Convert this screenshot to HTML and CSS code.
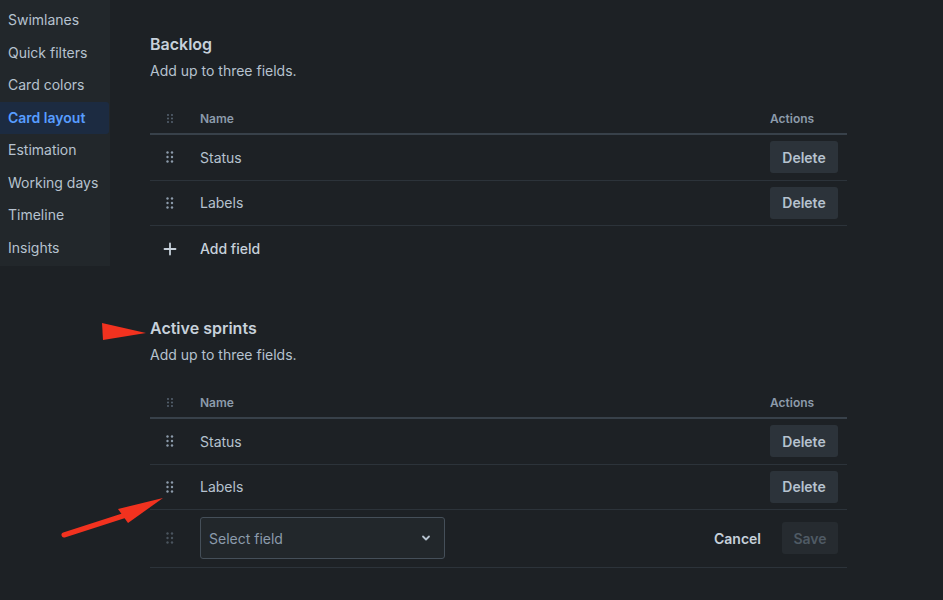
FILE: index.html
```html
<!DOCTYPE html>
<html>
<head>
<meta charset="utf-8">
<link rel="stylesheet" href="styles.css">
</head>
<body>
<div class="page">
  <nav class="sidebar">
    <div class="nav-item">Swimlanes</div>
    <div class="nav-item">Quick filters</div>
    <div class="nav-item">Card colors</div>
    <div class="nav-item active">Card layout</div>
    <div class="nav-item">Estimation</div>
    <div class="nav-item">Working days</div>
    <div class="nav-item">Timeline</div>
    <div class="nav-item">Insights</div>
  </nav>
  <main class="main">
    <section class="section">
      <h2 class="title">Backlog</h2>
      <p class="desc">Add up to three fields.</p>
      <div class="table">
        <div class="row head">
          <div class="c-drag"><svg class="drag dim" width="6" height="9" viewBox="0 0 6 9"><circle cx="1" cy="1" r="0.9"/><circle cx="5" cy="1" r="0.9"/><circle cx="1" cy="4.5" r="0.9"/><circle cx="5" cy="4.5" r="0.9"/><circle cx="1" cy="8" r="0.9"/><circle cx="5" cy="8" r="0.9"/></svg></div>
          <div class="c-name">Name</div>
          <div class="c-act">Actions</div>
        </div>
        <div class="row">
          <div class="c-drag"><svg class="drag" width="8" height="12" viewBox="0 0 8 12"><circle cx="1.5" cy="1.5" r="1.2"/><circle cx="6" cy="1.5" r="1.2"/><circle cx="1.5" cy="6" r="1.2"/><circle cx="6" cy="6" r="1.2"/><circle cx="1.5" cy="10.5" r="1.2"/><circle cx="6" cy="10.5" r="1.2"/></svg></div>
          <div class="c-name">Status</div>
          <div class="c-act"><button class="btn">Delete</button></div>
        </div>
        <div class="row">
          <div class="c-drag"><svg class="drag" width="8" height="12" viewBox="0 0 8 12"><circle cx="1.5" cy="1.5" r="1.2"/><circle cx="6" cy="1.5" r="1.2"/><circle cx="1.5" cy="6" r="1.2"/><circle cx="6" cy="6" r="1.2"/><circle cx="1.5" cy="10.5" r="1.2"/><circle cx="6" cy="10.5" r="1.2"/></svg></div>
          <div class="c-name">Labels</div>
          <div class="c-act"><button class="btn">Delete</button></div>
        </div>
        <div class="row add">
          <div class="c-drag"><svg class="plus" width="14" height="14" viewBox="0 0 14 14"><path d="M7 1.5v11M1.5 7h11" stroke-width="1.8" stroke-linecap="round"/></svg></div>
          <div class="c-name strong">Add field</div>
        </div>
      </div>
    </section>

    <section class="section second">
      <h2 class="title">Active sprints</h2>
      <p class="desc">Add up to three fields.</p>
      <div class="table">
        <div class="row head">
          <div class="c-drag"><svg class="drag dim" width="6" height="9" viewBox="0 0 6 9"><circle cx="1" cy="1" r="0.9"/><circle cx="5" cy="1" r="0.9"/><circle cx="1" cy="4.5" r="0.9"/><circle cx="5" cy="4.5" r="0.9"/><circle cx="1" cy="8" r="0.9"/><circle cx="5" cy="8" r="0.9"/></svg></div>
          <div class="c-name">Name</div>
          <div class="c-act">Actions</div>
        </div>
        <div class="row">
          <div class="c-drag"><svg class="drag" width="8" height="12" viewBox="0 0 8 12"><circle cx="1.5" cy="1.5" r="1.2"/><circle cx="6" cy="1.5" r="1.2"/><circle cx="1.5" cy="6" r="1.2"/><circle cx="6" cy="6" r="1.2"/><circle cx="1.5" cy="10.5" r="1.2"/><circle cx="6" cy="10.5" r="1.2"/></svg></div>
          <div class="c-name">Status</div>
          <div class="c-act"><button class="btn">Delete</button></div>
        </div>
        <div class="row">
          <div class="c-drag"><svg class="drag" width="8" height="12" viewBox="0 0 8 12"><circle cx="1.5" cy="1.5" r="1.2"/><circle cx="6" cy="1.5" r="1.2"/><circle cx="1.5" cy="6" r="1.2"/><circle cx="6" cy="6" r="1.2"/><circle cx="1.5" cy="10.5" r="1.2"/><circle cx="6" cy="10.5" r="1.2"/></svg></div>
          <div class="c-name">Labels</div>
          <div class="c-act"><button class="btn">Delete</button></div>
        </div>
        <div class="row edit">
          <div class="c-drag"><svg class="drag faint" width="8" height="12" viewBox="0 0 8 12"><circle cx="1.5" cy="1.5" r="1.2"/><circle cx="6" cy="1.5" r="1.2"/><circle cx="1.5" cy="6" r="1.2"/><circle cx="6" cy="6" r="1.2"/><circle cx="1.5" cy="10.5" r="1.2"/><circle cx="6" cy="10.5" r="1.2"/></svg></div>
          <div class="c-name">
            <div class="select">
              <span class="placeholder">Select field</span>
              <svg class="chev" width="12" height="12" viewBox="0 0 12 12"><path d="M3 4.5l3 3 3-3" fill="none" stroke-width="1.8" stroke-linecap="round" stroke-linejoin="round"/></svg>
            </div>
          </div>
          <div class="c-edit">
            <button class="link">Cancel</button>
            <button class="btn disabled">Save</button>
          </div>
        </div>
      </div>
    </section>
  </main>
</div>
<svg class="annot" width="943" height="600" viewBox="0 0 943 600">
  <polygon points="102,323 146,333 103,340" fill="#f2321f"/>
  <path d="M64 535 L126 515" stroke="#f2321f" stroke-width="5" stroke-linecap="round"/>
  <polygon points="163,498 118,509 128,523" fill="#f2321f"/>
</svg>
</body>
</html>
```
FILE: styles.css
```css
* { box-sizing: border-box; }
html, body {
  margin: 0;
  padding: 0;
  background: #1d2125;
  color: #b6c2cf;
  font-family: Inter, "Noto Sans", "Liberation Sans", sans-serif;
  font-size: 14px;
}
.page {
  display: flex;
  align-items: flex-start;
  width: 943px;
  height: 600px;
  overflow: hidden;
}
.sidebar {
  width: 110px;
  flex: none;
  background: #22272b;
  padding: 4px 0 2px;
}
.nav-item {
  height: 32.5px;
  line-height: 32.5px;
  padding-left: 8px;
  color: #b6c2cf;
  font-size: 14px;
  white-space: nowrap;
}
.nav-item.active {
  background: #1c2b41;
  color: #579dff;
  font-weight: 600;
  margin-right: 1px;
  border-radius: 0 3px 3px 0;
}
.main {
  flex: 1;
  padding: 34px 96px 0 40px;
}
.section.second { margin-top: 46.5px; }
.title {
  margin: 0;
  font-size: 16px;
  line-height: 20px;
  font-weight: 600;
  color: #c7d1db;
}
.desc {
  margin: 7px 0 0;
  line-height: 20px;
  color: #b6c2cf;
}
.table { margin-top: 22px; }
.row {
  display: flex;
  align-items: center;
  height: 45.5px;
  border-bottom: 1px solid #2c333a;
}
.row.head {
  height: 32px;
  border-bottom: 2px solid #38414a;
  font-size: 12px;
  font-weight: 600;
  color: #8c9bab;
}
.row.add { border-bottom: none; height: 45.5px; }
.row.edit { height: 57.5px; }
.c-drag {
  width: 50px;
  flex: none;
  display: flex;
  justify-content: center;
  padding-right: 10px;
}
.c-name { flex: 1; display: flex; align-items: center; }
.c-name.strong { font-weight: 500; color: #c7d1db; }
.c-act { width: 68px; margin-right: 9px; flex: none; }
.c-edit {
  display: flex;
  align-items: center;
  gap: 21px;
  margin-right: 9px;
}
.drag { fill: #8c9bab; }
.drag.dim { fill: #5d6b79; }
.drag.faint { fill: #4a545e; }
.plus { stroke: #c7d1db; }
.btn {
  font: inherit;
  font-weight: 600;
  width: 68px;
  height: 32px;
  border: none;
  border-radius: 3px;
  background: #2c333a;
  color: #b6c2cf;
  padding: 0;
  font-size: 14px;
}
.btn.disabled {
  width: 56px;
  background: #262b30;
  color: #4f5a64;
}
.link {
  font: inherit;
  font-weight: 600;
  background: none;
  border: none;
  padding: 0;
  color: #c7d1db;
}
.select {
  width: 245px;
  height: 42px;
  border: 1px solid #454f59;
  border-radius: 3px;
  background: #22272b;
  display: flex;
  align-items: center;
  justify-content: space-between;
  padding: 0 12px 0 8px;
}
.placeholder { color: #8c9bab; font-size: 14px; }
.chev { stroke: #b6c2cf; }
.annot {
  position: absolute;
  left: 0;
  top: 0;
  pointer-events: none;
}
```
